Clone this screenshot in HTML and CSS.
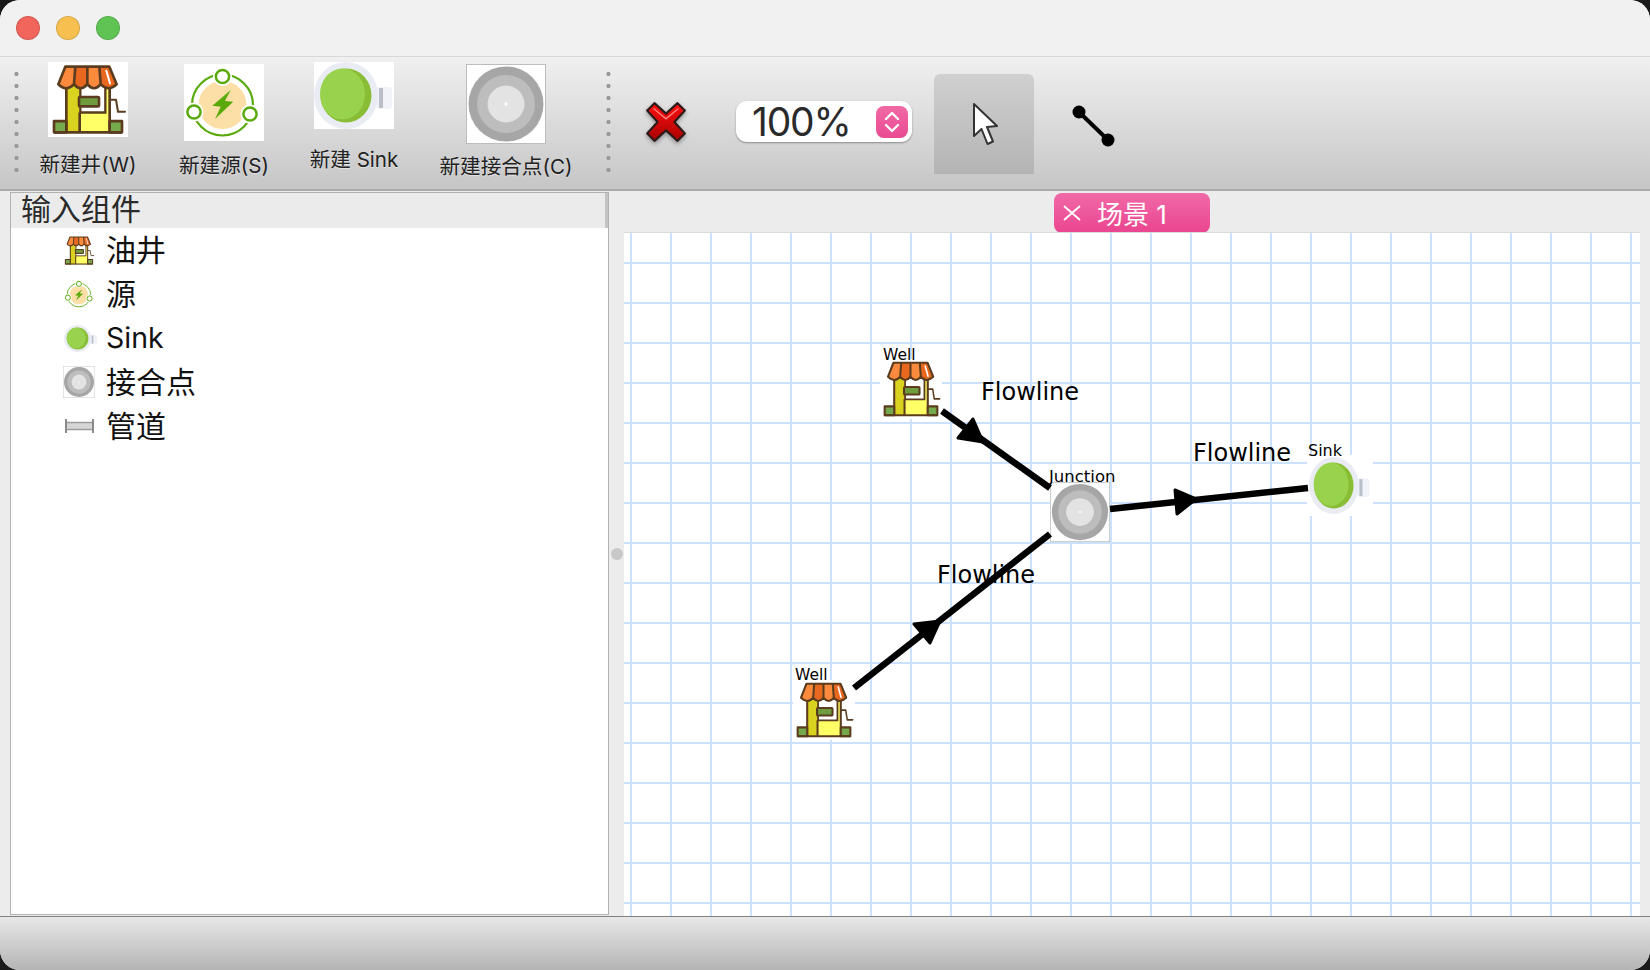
FILE: index.html
```html
<!DOCTYPE html>
<html lang="zh">
<head>
<meta charset="utf-8">
<title>场景 1</title>
<link rel="stylesheet" href="styles.css">
</head>
<body>
<svg class="defs" width="0" height="0" aria-hidden="true">
  <defs>
    <symbol id="i-well" viewBox="54 22 240 223" preserveAspectRatio="none">
      <rect x="54" y="22" width="240" height="223" fill="#fff"/>
      <rect x="108" y="92" width="132" height="140" fill="#ffff66"/>
      <rect x="108" y="92" width="40" height="140" fill="#d9d21f"/>
      <rect x="150" y="92" width="76" height="80" fill="#fff"/>
      <path d="M151 95V172H226V95" fill="none" stroke="#5b3c1e" stroke-width="7"/>
      <path d="M109 90V232M239 90V232M149 172V232" fill="none" stroke="#5b3c1e" stroke-width="8"/>
      <rect x="147" y="126" width="60" height="28" rx="3" fill="#6f9c3e" stroke="#5b3c1e" stroke-width="8"/>
      <path d="M72 198H109V231H72Z" fill="#76a84c" stroke="#5b3c1e" stroke-width="8" stroke-linejoin="round"/>
      <path d="M239 198H276V231H239Z" fill="#76a84c" stroke="#5b3c1e" stroke-width="8" stroke-linejoin="round"/>
      <path d="M72 231H276" fill="none" stroke="#5b3c1e" stroke-width="8"/>
      <path d="M240 134H258L264 170H285" fill="none" stroke="#5b3c1e" stroke-width="6" stroke-linejoin="round" stroke-linecap="round"/>
      <path d="M106 36H136L132 88Q110 112 85 88Z" fill="#fb8a3c"/>
      <path d="M136 36H172V88Q152 112 132 88Z" fill="#e8681f"/>
      <path d="M172 36H208L212 88Q192 112 172 88Z" fill="#fb8a3c"/>
      <path d="M208 36H238L260 88Q234 112 212 88Z" fill="#e8681f"/>
      <path d="M106 36H238L260 88Q234 112 212 88Q192 112 172 88Q152 112 132 88Q110 112 85 88Z M136 36L132 88M172 36V88M208 36L212 88" fill="none" stroke="#5b3c1e" stroke-width="8" stroke-linejoin="round"/>
      <path d="M229 48L240 86" stroke="#fff" stroke-width="6" stroke-linecap="round"/>
    </symbol>
    <symbol id="i-source" viewBox="0 0 80 77" preserveAspectRatio="none">
      <rect width="80" height="77" fill="#fff"/>
      <circle cx="38.5" cy="41" r="24" fill="#fcdfa6"/>
      <circle cx="38.5" cy="41" r="30.5" fill="none" stroke="#5aaa0c" stroke-width="2.2"/>
      <circle cx="38.5" cy="12.5" r="9.5" fill="#fff"/>
      <circle cx="10" cy="48" r="9.5" fill="#fff"/>
      <circle cx="66" cy="50" r="9.5" fill="#fff"/>
      <circle cx="38.5" cy="12.5" r="6.6" fill="#fff" stroke="#5aaa0c" stroke-width="2.5"/>
      <circle cx="10" cy="48" r="6.6" fill="#fff" stroke="#5aaa0c" stroke-width="2.5"/>
      <circle cx="66" cy="50" r="6.6" fill="#fff" stroke="#5aaa0c" stroke-width="2.5"/>
      <path d="M46.7 26L28.3 41.7L36.7 42.7L31 55L49.3 37.7L41 37Z" fill="#5aaa0c"/>
    </symbol>
    <symbol id="i-sink" viewBox="0 0 80 67" preserveAspectRatio="none">
      <rect width="80" height="67" fill="#fff"/>
      <rect x="62" y="25" width="16" height="22" rx="4" fill="#f1f3f9"/>
      <rect x="65" y="26" width="4" height="20" fill="#b9bfc9"/>
      <ellipse cx="32" cy="33.5" rx="32" ry="33.5" fill="#e9ecf3"/>
      <ellipse cx="32" cy="33.5" rx="25.5" ry="27" fill="#88bd35"/>
      <ellipse cx="28.5" cy="32" rx="22.5" ry="25.5" fill="#99d34d"/>
    </symbol>
    <symbol id="i-junction" viewBox="0 0 80 80" preserveAspectRatio="none">
      <rect x=".5" y=".5" width="79" height="79" fill="#fff" stroke="#bdbdbd"/>
      <circle cx="40" cy="40" r="37.5" fill="#a6a6a6"/>
      <circle cx="40" cy="40" r="29" fill="#bdbdbd"/>
      <circle cx="40" cy="40" r="18.5" fill="#e3e3e3"/>
      <path d="M40 38V42M38 40H42" stroke="#fff" stroke-width="1.2"/>
    </symbol>
    <symbol id="i-pipe" viewBox="0 0 29 14" preserveAspectRatio="none">
      <rect x="2" y="3" width="26" height="8" fill="#d6d6d6"/>
      <path d="M2 3.5H27M2 10.5H27" stroke="#9c9c9c" stroke-width="1.4"/>
      <path d="M1 0V14M28 0V14" stroke="#8a8a8a" stroke-width="2"/>
    </symbol>
  </defs>
</svg>

<div class="window">
  <header class="titlebar">
    <span class="light light-red"></span>
    <span class="light light-yellow"></span>
    <span class="light light-green"></span>
  </header>

  <div class="toolbar">
    <span class="grip grip-first"></span>
    <div class="tool tool-well">
      <svg class="tool-icon"><use href="#i-well"/></svg>
      <span class="tool-label">新建井(W)</span>
    </div>
    <div class="tool tool-source">
      <svg class="tool-icon"><use href="#i-source"/></svg>
      <span class="tool-label">新建源(S)</span>
    </div>
    <div class="tool tool-sink">
      <svg class="tool-icon"><use href="#i-sink"/></svg>
      <span class="tool-label">新建 Sink</span>
    </div>
    <div class="tool tool-junction">
      <svg class="tool-icon"><use href="#i-junction"/></svg>
      <span class="tool-label">新建接合点(C)</span>
    </div>
    <span class="grip"></span>
    <svg class="delete-icon" viewBox="0 0 42 40">
      <defs>
        <linearGradient id="red" x1="0" y1="0" x2="0" y2="1">
          <stop offset="0" stop-color="#ff1010"/>
          <stop offset="1" stop-color="#a80000"/>
        </linearGradient>
      </defs>
      <path d="M3 9L10 2L21 12L32 2L39 9L29 20L39 31L32 38L21 28L10 38L3 31L13 20Z" fill="url(#red)" stroke="#2e1a1a" stroke-width="2" stroke-linejoin="round"/>
      <path d="M9 7L21 17L33 7" fill="none" stroke="#ff8a8a" stroke-width="1.2"/>
    </svg>
    <div class="zoom-box">
      <span class="zoom-value">100%</span>
      <span class="zoom-spin">
        <svg class="zoom-arrows" viewBox="0 0 16 24"><path d="M2 9L8 3L14 9M2 15L8 21L14 15" fill="none" stroke="#fff" stroke-width="2.4" stroke-linecap="round" stroke-linejoin="round"/></svg>
      </span>
    </div>
    <div class="mode mode-active">
      <svg class="cursor-icon" viewBox="0 0 26 44"><path d="M2 2V34L9.5 27L15.5 42L21 39.5L15 25L25 24Z" fill="#fff" stroke="#333" stroke-width="2" stroke-linejoin="round"/></svg>
    </div>
    <div class="mode">
      <svg class="line-icon" viewBox="0 0 43 42"><path d="M7 7L36 35" stroke="#000" stroke-width="4"/><circle cx="7" cy="7" r="6.5" fill="#000"/><circle cx="36" cy="35" r="6.5" fill="#000"/></svg>
    </div>
  </div>

  <main class="main">
    <aside class="panel">
      <div class="panel-head">输入组件</div>
      <ul class="tree">
        <li class="tree-row"><span class="tree-slot"><svg class="ti ti-well"><use href="#i-well"/></svg></span>油井</li>
        <li class="tree-row"><span class="tree-slot"><svg class="ti ti-source"><use href="#i-source"/></svg></span>源</li>
        <li class="tree-row"><span class="tree-slot"><svg class="ti ti-sink"><use href="#i-sink"/></svg></span><span class="latin">Sink</span></li>
        <li class="tree-row"><span class="tree-slot"><svg class="ti ti-junction"><use href="#i-junction"/></svg></span>接合点</li>
        <li class="tree-row"><span class="tree-slot"><svg class="ti ti-pipe"><use href="#i-pipe"/></svg></span>管道</li>
      </ul>
    </aside>
    <div class="splitter"><span class="splitter-dot"></span></div>
    <section class="scene">
      <div class="tabs">
        <div class="tab">
          <svg class="tab-x" viewBox="0 0 18 16"><path d="M1 1L17 15M17 1L1 15" stroke="#fff" stroke-width="1.8"/></svg>
          <span>场景 1</span>
        </div>
      </div>
      <div class="canvas">
        <div class="node node-well1"><svg class="node-icon"><use href="#i-well"/></svg></div>
        <div class="node node-well2"><svg class="node-icon"><use href="#i-well"/></svg></div>
        <div class="node node-junction"><svg class="node-icon"><use href="#i-junction"/></svg></div>
        <div class="node node-sink"><svg class="node-icon"><use href="#i-sink"/></svg></div>
        <svg class="links" viewBox="624 233 1016 683">
          <g stroke="#000" stroke-width="6.5" fill="none">
            <path d="M942 411L1050 488"/>
            <path d="M1110 509L1308 488"/>
            <path d="M854 688L1050 534"/>
          </g>
          <g fill="#000" stroke="#000" stroke-width="3" stroke-linejoin="round">
            <path d="M973 419L958 438L983 442Z"/>
            <path d="M1175 490L1177 514L1196 499Z"/>
            <path d="M914 624L930 643L940 621Z"/>
          </g>
        </svg>
        <span class="tag tag-well1">Well</span>
        <span class="tag tag-well2">Well</span>
        <span class="tag tag-junction">Junction</span>
        <span class="tag tag-sink">Sink</span>
        <span class="flow flow-1">Flowline</span>
        <span class="flow flow-2">Flowline</span>
        <span class="flow flow-3">Flowline</span>
      </div>
    </section>
  </main>

  <footer class="statusbar"></footer>
</div>
</body>
</html>
```

FILE: styles.css
```css
* { box-sizing: border-box; }

html, body {
  margin: 0;
  height: 100%;
  background: #1a1a1a;
}

body {
  font-family: "Inter", "Noto Sans CJK SC", sans-serif;
  color: #111;
  overflow: hidden;
}

.defs { position: absolute; }

.window {
  width: 1650px;
  height: 970px;
  display: flex;
  flex-direction: column;
  border-radius: 20px;
  overflow: hidden;
  background: #ececec;
}

/* Title bar */
.titlebar {
  height: 57px;
  flex: none;
  display: flex;
  align-items: center;
  gap: 16px;
  padding: 0 0 1px 16px;
  background: #f1f1f1;
  border-bottom: 1px solid #d8d8d8;
}

.light {
  width: 24px;
  height: 24px;
  border-radius: 50%;
  border: 1px solid rgba(0, 0, 0, .12);
}
.light-red { background: #f1655c; }
.light-yellow { background: #f6bf4f; }
.light-green { background: #5fc454; }

/* Toolbar */
.toolbar {
  height: 134px;
  flex: none;
  display: flex;
  align-items: flex-start;
  background: linear-gradient(#f0f0f0, #c6c6c6);
  border-bottom: 2px solid #a9a9a9;
  padding-left: 14px;
}

.grip {
  flex: none;
  width: 5px;
  height: 108px;
  margin-top: 11px;
  background: radial-gradient(circle, #9a9a9a 1.8px, transparent 2.4px) 0 0 / 5px 12px repeat-y;
}

.tool {
  flex: none;
  display: flex;
  flex-direction: column;
  align-items: center;
  font-size: 20.6px;
  line-height: 24px;
  color: #222;
  text-shadow: 0 1px 1px rgba(255, 255, 255, .5);
}
.tool-label { white-space: nowrap; }
.tool-icon { display: block; width: 80px; }

.tool-well { width: 116px; margin-left: 11px; padding-top: 5px; }
.tool-well .tool-icon { height: 75px; }
.tool-well .tool-label { margin-top: 16px; }

.tool-source { width: 156px; padding-top: 7px; }
.tool-source .tool-icon { height: 77px; }
.tool-source .tool-label { margin-top: 13px; }

.tool-sink { width: 104px; padding-top: 5px; }
.tool-sink .tool-icon { height: 67px; }
.tool-sink .tool-label { margin-top: 19px; }

.tool-junction { width: 200px; padding-top: 7px; }
.tool-junction .tool-icon { height: 80px; }
.tool-junction .tool-label { margin-top: 11px; }

.delete-icon {
  flex: none;
  width: 44px;
  height: 44px;
  margin: 43px 0 0 33px;
  filter: drop-shadow(0 2px 2px rgba(0, 0, 0, .35));
}

.zoom-box {
  flex: none;
  width: 176px;
  height: 41px;
  margin: 44px 0 0 48px;
  padding: 0 4px 0 16px;
  display: flex;
  align-items: center;
  justify-content: space-between;
  background: #fff;
  border-radius: 11px;
  box-shadow: 0 1px 2px rgba(0, 0, 0, .35);
}
.zoom-value {
  font-size: 39px;
  letter-spacing: -1.2px;
  color: #2a2a2a;
  line-height: 41px;
}
.zoom-spin {
  width: 32px;
  height: 32px;
  display: flex;
  align-items: center;
  justify-content: center;
  border-radius: 8px;
  background: linear-gradient(#f069a6, #ea4a92);
}
.zoom-arrows { width: 16px; height: 24px; }

.mode {
  flex: none;
  width: 100px;
  height: 100px;
  margin-top: 17px;
  display: flex;
  align-items: center;
  justify-content: center;
}
.mode-active {
  margin-left: 22px;
  border-radius: 6px 6px 0 0;
  background: linear-gradient(#d0d0d0, #b4b4b4);
}
.cursor-icon { width: 26px; height: 44px; margin-left: 2px; }
.line-icon { width: 43px; height: 42px; margin: 4px 0 0 18px; }

/* Main area */
.main {
  flex: 1;
  min-height: 0;
  display: flex;
}

.panel {
  flex: none;
  width: 599px;
  margin: 1px 0 1px 10px;
  display: flex;
  flex-direction: column;
  background: #fff;
  border: 1px solid #b2b2b2;
}
.panel-head {
  height: 35px;
  flex: none;
  padding: 0 0 2px 10px;
  font-size: 30px;
  line-height: 33px;
  color: #2a2a2a;
  background: #ebebeb;
  border-right: 3px solid #c4c4c4;
}

.tree {
  list-style: none;
  margin: 0;
  padding: 0;
}
.tree-row {
  height: 44px;
  display: flex;
  align-items: center;
  padding-bottom: 4px;
  font-size: 30px;
  color: #111;
}
.tree-slot {
  width: 95px;
  height: 44px;
  padding: 4px 0 0 41px;
  display: flex;
  align-items: center;
  justify-content: center;
}
.latin { font-size: 28.5px; margin-top: 2px; }
.ti { display: block; }
.ti-well { width: 32px; height: 31px; }
.ti-source { width: 31px; height: 30px; }
.ti-sink { width: 34px; height: 27px; margin-left: 4px; }
.ti-junction { width: 32px; height: 32px; }
.ti-pipe { width: 29px; height: 14px; }

.splitter {
  flex: none;
  width: 15px;
  display: flex;
  align-items: center;
  justify-content: center;
}
.splitter-dot {
  width: 12px;
  height: 12px;
  border-radius: 50%;
  background: #c8c8c8;
}

.scene {
  flex: none;
  width: 1016px;
  display: flex;
  flex-direction: column;
}

.tabs {
  height: 41px;
  flex: none;
  padding: 2px 0 0 430px;
}
.tab {
  position: relative;
  width: 156px;
  height: 40px;
  display: flex;
  align-items: center;
  gap: 16px;
  padding: 0 0 2px 9px;
  border-radius: 8px;
  color: #fff;
  font-size: 26px;
  background: linear-gradient(#f169a7, #ea4590);
}
.tab-x { width: 18px; height: 16px; flex: none; margin-top: 2px; }

.canvas {
  flex: 1;
  position: relative;
  overflow: hidden;
  background-color: #fff;
  background-image:
    linear-gradient(to right, #cce0ff 2px, transparent 2px),
    linear-gradient(to bottom, #cce0ff 2px, transparent 2px);
  background-size: 40px 40px;
  background-position: 6px 0, 0 29px;
  border-top: 1px solid #dcdcdc;
}

.node {
  position: absolute;
  background: #fff;
}
.node-icon { display: block; width: 100%; height: 100%; }
.node-well1 { left: 256px; top: 126px; width: 62px; height: 60px; }
.node-well2 { left: 169px; top: 447px; width: 62px; height: 60px; }
.node-junction { left: 426px; top: 249px; width: 60px; height: 60px; }
.node-sink { left: 685px; top: 224px; width: 62px; height: 57px; box-shadow: 0 0 0 2px #fff; }

.links {
  position: absolute;
  left: 0;
  top: 0;
  width: 1016px;
  height: 683px;
}

.tag, .flow {
  position: absolute;
  font-family: "DejaVu Sans", sans-serif;
  color: #000;
  white-space: nowrap;
}
.tag { font-size: 15.5px; line-height: 18px; }
.tag-well1 { left: 259px; top: 113px; }
.tag-well2 { left: 171px; top: 433px; }
.tag-junction { left: 425px; top: 235px; font-size: 16.5px; }
.tag-sink { left: 684px; top: 209px; font-size: 16px; }

.flow { font-size: 24px; line-height: 30px; }
.flow-1 { left: 357px; top: 144px; }
.flow-2 { left: 569px; top: 205px; }
.flow-3 { left: 313px; top: 327px; }

/* Status bar */
.statusbar {
  height: 54px;
  flex: none;
  background: linear-gradient(#e8e8e8, #b4b4b4);
  border-top: 1px solid #808080;
}
```
